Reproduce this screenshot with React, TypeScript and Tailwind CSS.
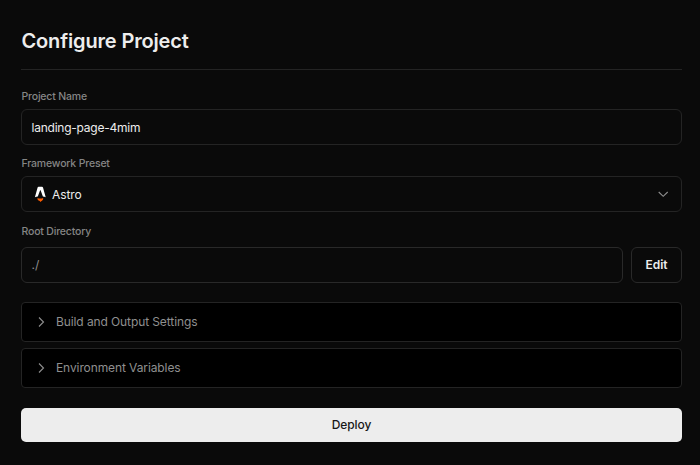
import React from "react";

function Chevron({ className, d }: { className: string; d: string }) {
  return (
    <svg className={className} viewBox="0 0 12 12" fill="none" stroke="currentColor" strokeWidth="1.1">
      <path d={d} />
    </svg>
  );
}

function AstroLogo() {
  return (
    <svg className="h-4 w-3 shrink-0" viewBox="0 0 12 16">
      <path
        fill="#fff"
        d="M3.600 1.500C3.800.9 4.100.7 4.600.7h3.400c.5 0 .8.2 1 .8l2.700 9.700c-.9-.4-1.800-.7-2.800-.8L6.700 4.500c-.1-.4-.6-.4-.7 0L3.800 10.400c-1 .1-2 .4-2.900.8z"
      />
      <path
        fill="#ff5d01"
        d="M3.600 11.900c1.200.8 4.300.8 5.500 0 .3 1.100-.1 1.900-.9 2.500-.7.500-1.300.8-1.800 1.500-.4-.7-.9-.9-1.600-1.300-1.100-.6-1.500-1.600-1.200-2.700z"
      />
    </svg>
  );
}

function Label({ children }: { children: string }) {
  return (
    <label className="block h-4 pl-[0.5px] text-[10.5px] leading-4 font-medium tracking-[-0.18px] text-[#858585]">
      {children}
    </label>
  );
}

function Section({ title }: { title: string }) {
  return (
    <button className="flex h-10 w-full items-center rounded border border-[#242424] bg-black pl-[13px] text-left text-[#8f8f8f]">
      <Chevron className="size-3 shrink-0" d="M4 1.500 8.500 6 4 10.500" />
      <span className="ml-[9px] text-[12px] tracking-[-0.1px]">{title}</span>
    </button>
  );
}

export default function App() {
  return (
    <main className="h-[465px] w-[700px] bg-[#0a0a0a] pt-[26px] pr-[18px] pl-[21px] font-[Inter,sans-serif] text-[#ededed]">
      <h1 className="h-[43px] pl-[0.5px] text-[20px] leading-[30px] font-semibold tracking-[-0.15px]">Configure Project</h1>
      <hr className="border-[#242424]" />
      <div className="mt-[19px]">
        <Label>Project Name</Label>
        <div className="mt-1 flex h-9 items-center rounded-md border border-[#242424] px-[9.5px] text-[12px]">
          <span className="pt-px tracking-[-0.23px]">landing-page-4mim</span>
        </div>
      </div>
      <div className="mt-[11px]">
        <Label>Framework Preset</Label>
        <div className="mt-1 flex h-9 items-center rounded-md border border-[#242424] pr-3 pl-3 text-[12px]">
          <AstroLogo />
          <span className="ml-1.5 pt-px tracking-[-0.1px]">Astro</span>
          <Chevron className="ml-auto size-3 text-[#8f8f8f]" d="M1.700 4 6.200 8.300 10.700 4" />
        </div>
      </div>
      <div className="mt-3">
        <Label>Root Directory</Label>
        <div className="mt-[7px] flex gap-2">
          <div className="flex h-9 flex-1 items-center rounded-md border border-[#292929] px-[9.5px] text-[12px] text-[#8f8f8f]">
            <span>./</span>
          </div>
          <button className="h-9 w-[51px] rounded-md border border-[#292929] text-[12px] font-semibold">Edit</button>
        </div>
      </div>
      <div className="mt-[19px] flex flex-col gap-1.5">
        <Section title="Build and Output Settings" />
        <Section title="Environment Variables" />
      </div>
      <button className="mt-5 h-[34px] w-full rounded-[5px] bg-[#ededed] text-[12px] font-medium tracking-[-0.1px] text-[#171717]">
        Deploy
      </button>
    </main>
  );
}
